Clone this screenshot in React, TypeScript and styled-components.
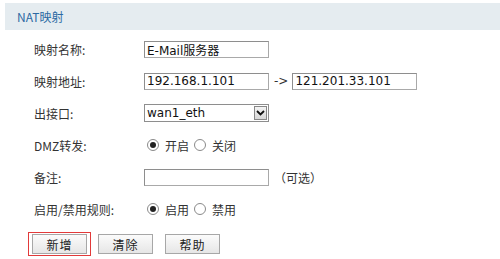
import React from 'react';
import styled, { createGlobalStyle } from 'styled-components';

const GlobalStyle = createGlobalStyle`
  html, body {
    margin: 0;
    padding: 0;
    background: #ffffff;
  }
  body {
    font-family: 'DejaVu Sans', 'Noto Sans CJK SC', sans-serif;
    font-size: 12px;
    color: #333333;
  }
`;

const Page = styled.div`
  width: 500px;
  height: 259px;
  padding-top: 3px;
  box-sizing: border-box;
  overflow: hidden;
`;

const TitleBar = styled.div`
  margin-left: 5px;
  height: 27px;
  background: #e5ecf0;
  display: flex;
  align-items: center;
  padding-left: 12px;
  color: #2d6aa3;
  font-size: 12px;
  font-family: 'Noto Sans CJK SC', 'DejaVu Sans', sans-serif;
`;

const Form = styled.div`
  padding-top: 3px;
`;

const Row = styled.div`
  height: 32px;
  display: flex;
  align-items: center;
`;

const Label = styled.div`
  width: 110px;
  padding-left: 34px;
  font-family: 'Noto Sans CJK SC', sans-serif;
  font-size: 12px;
  color: #333;
`;

const Field = styled.div`
  display: flex;
  align-items: center;
`;

const TextBox = styled.div<{ $w?: number }>`
  width: ${(p) => p.$w ?? 125}px;
  height: 17px;
  box-sizing: border-box;
  border: 1px solid #a9a9a9;
  border-top-color: #8e8e8e;
  border-left-color: #8e8e8e;
  padding-left: 2px;
  display: flex;
  align-items: center;
  font-size: 12px;
  color: #111;
  white-space: nowrap;
  font-family: 'DejaVu Sans', 'Noto Sans CJK SC', sans-serif;
`;

const Arrow = styled.span`
  margin: 0 4px 0 5px;
  color: #333;
`;

const Select = styled.div`
  width: 125px;
  height: 18px;
  box-sizing: border-box;
  border: 1px solid #8e8e8e;
  display: flex;
  align-items: center;
  font-size: 12px;
  color: #111;
`;

const SelectText = styled.div`
  flex: 1;
  padding-left: 2px;
`;

const DropButton = styled.div`
  width: 13px;
  height: 14px;
  margin-right: 1px;
  box-sizing: border-box;
  border: 1px solid #888;
  background: linear-gradient(#f4f4f4, #d8d8d8);
  display: flex;
  align-items: center;
  justify-content: center;
`;

const RadioGroup = styled.div`
  display: flex;
  align-items: center;
  margin-left: 3px;
  font-family: 'Noto Sans CJK SC', sans-serif;
`;

const RadioDot = styled.span<{ $on?: boolean }>`
  width: 12px;
  height: 12px;
  box-sizing: border-box;
  border-radius: 50%;
  border: 1px solid #8a8a8a;
  background: #fff;
  display: inline-flex;
  align-items: center;
  justify-content: center;
  margin-right: 6px;
  &::after {
    content: '';
    width: 6px;
    height: 6px;
    border-radius: 50%;
    background: ${(p) => (p.$on ? '#222' : 'transparent')};
  }
`;

const RadioText = styled.span`
  margin-right: 5px;
`;

const Hint = styled.span`
  margin-left: 5px;
  font-family: 'Noto Sans CJK SC', sans-serif;
`;

const Buttons = styled.div`
  display: flex;
  align-items: center;
  padding-left: 28px;
  margin-top: 7px;
`;

const Highlight = styled.div`
  border: 1px solid #e23a3a;
  padding: 1px 3px;
  margin-right: 7px;
  display: flex;
`;

const Button = styled.div<{ $gap?: number }>`
  width: 55px;
  height: 20px;
  box-sizing: border-box;
  border: 1px solid #a7a7a7;
  background: linear-gradient(#fbfbfb, #e6e6e6);
  display: flex;
  align-items: center;
  justify-content: center;
  margin-right: ${(p) => p.$gap ?? 0}px;
  font-family: 'Noto Sans CJK SC', sans-serif;
  font-size: 12px;
  color: #222;
  letter-spacing: 1px;
`;

const Radio = ({ on, text }: { on?: boolean; text: string }) => (
  <>
    <RadioDot $on={on} />
    <RadioText>{text}</RadioText>
  </>
);

const App = () => {
  return (
    <Page>
      <GlobalStyle />
      <TitleBar>NAT映射</TitleBar>
      <Form>
        <Row>
          <Label>映射名称:</Label>
          <Field>
            <TextBox>E-Mail服务器</TextBox>
          </Field>
        </Row>
        <Row>
          <Label>映射地址:</Label>
          <Field>
            <TextBox>192.168.1.101</TextBox>
            <Arrow>-&gt;</Arrow>
            <TextBox>121.201.33.101</TextBox>
          </Field>
        </Row>
        <Row>
          <Label>出接口:</Label>
          <Field>
            <Select>
              <SelectText>wan1_eth</SelectText>
              <DropButton>
                <svg width="9" height="6" viewBox="0 0 9 6">
                  <path d="M1 1 L4.5 4.5 L8 1" fill="none" stroke="#111" strokeWidth="1.8" />
                </svg>
              </DropButton>
            </Select>
          </Field>
        </Row>
        <Row>
          <Label>DMZ转发:</Label>
          <RadioGroup>
            <Radio on text="开启" />
            <Radio text="关闭" />
          </RadioGroup>
        </Row>
        <Row>
          <Label>备注:</Label>
          <Field>
            <TextBox />
            <Hint>（可选）</Hint>
          </Field>
        </Row>
        <Row>
          <Label>启用/禁用规则:</Label>
          <RadioGroup>
            <Radio on text="启用" />
            <Radio text="禁用" />
          </RadioGroup>
        </Row>
      </Form>
      <Buttons>
        <Highlight>
          <Button>新增</Button>
        </Highlight>
        <Button $gap={12}>清除</Button>
        <Button>帮助</Button>
      </Buttons>
    </Page>
  );
};

export default App;
